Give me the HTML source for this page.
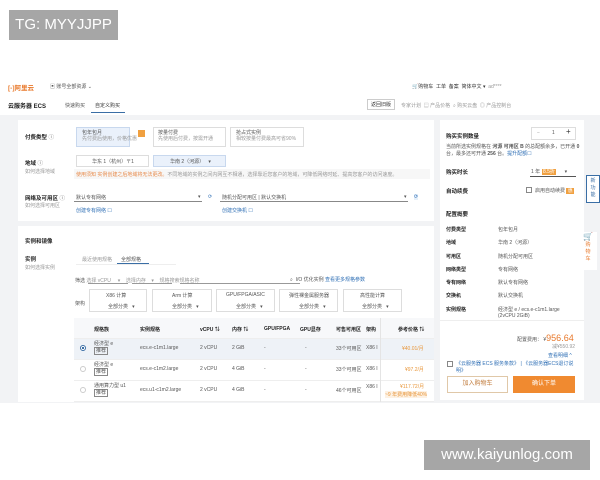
<!DOCTYPE html>
<html><head><meta charset="utf-8"><style>
*{margin:0;padding:0;box-sizing:border-box}
body{width:600px;height:480px;background:#fff;position:relative;overflow:hidden;font-family:"Liberation Sans","Noto Sans CJK SC",sans-serif;color:#333}
.a{position:absolute;white-space:nowrap}
.t{font-size:5px;color:#555}
.b{font-weight:bold;color:#222}
.g{color:#999}
.bl{color:#2f6fb5}
.box{position:absolute;border:1px solid #ddd;background:#fff}
.sel{border-color:#c8d8ee;background:#eaf1fb}
.row{position:absolute;left:74px;width:360px;border-bottom:1px solid #eee;height:21px}
</style></head><body>
<div class="a" style="left:9px;top:10px;width:109px;height:30px;background:#a6a6a6;color:#fff;font-size:15px;line-height:30px;text-align:center">TG: MYYJJPP</div>
<div class="a" style="left:424px;top:440px;width:166px;height:30px;background:#a6a6a6;color:#fff;font-size:15px;line-height:30px;text-align:center">www.kaiyunlog.com</div>

<!-- header -->
<div class="a" style="left:8px;top:82px;font-size:6.5px;color:#e8782a;font-weight:bold">[-]阿里云</div>
<div class="a t" style="left:50px;top:83px">▣ 账号全部资源 ⌄</div>
<div class="a t" style="left:412px;top:83px;color:#333">🛒购物车 &nbsp;工单 &nbsp;备案 &nbsp;简体中文 ▾ &nbsp;<span class="g">ad****</span></div>
<div class="a b" style="left:8px;top:101px;font-size:6px">云服务器 ECS</div>
<div class="a t" style="left:65px;top:102px">快速购买</div>
<div class="a t" style="left:95px;top:102px;color:#333">自定义购买</div>
<div class="a" style="left:91px;top:112px;width:34px;height:1px;background:#3a6ea5"></div>
<div class="a t" style="left:367px;top:99px;border:1px solid #ccc;padding:1px 3px;color:#333">返回旧版</div>
<div class="a t g" style="left:401px;top:102px">专家计划 &nbsp;▤ 产品价格 &nbsp;⌕ 购买云盘 &nbsp;◎ 产品控制台</div>

<!-- gray bg -->
<div class="a" style="left:0;top:115px;width:600px;height:288px;background:#f2f3f5"></div>

<!-- card1 -->
<div class="a" style="left:18px;top:120px;width:416px;height:101px;background:#fff"></div>
<div class="a t b" style="left:25px;top:133px;font-size:5.5px">付费类型 <span class="g">ⓘ</span></div>
<div class="box sel" style="left:76px;top:127px;width:54px;height:20px;background:#eaf1fb"></div>
<div class="a" style="left:138px;top:130px;width:7px;height:7px;background:#f0a040"></div>
<div class="a t" style="left:82px;top:130px;line-height:6px">包年包月<br><span class="g">先付费后使用，价格优惠</span></div>
<div class="box" style="left:153px;top:127px;width:73px;height:20px"></div>
<div class="a t" style="left:158px;top:130px;line-height:6px">按量付费<br><span class="g">先使用后付费，按需开通</span></div>
<div class="box" style="left:230px;top:127px;width:74px;height:20px"></div>
<div class="a t" style="left:236px;top:130px;line-height:6px">抢占式实例<br><span class="g">相较按量付费最高可省90%</span></div>

<div class="a t b" style="left:25px;top:159px;font-size:5.5px">地域 <span class="g">ⓘ</span></div>
<div class="a t g" style="left:25px;top:168px">如何选择地域</div>
<div class="box" style="left:76px;top:155px;width:73px;height:12px"></div>
<div class="a t" style="left:92px;top:158px">华东 1（杭州）〒1</div>
<div class="box sel" style="left:153px;top:155px;width:73px;height:12px"></div>
<div class="a t" style="left:170px;top:158px">华南 2（河源） &nbsp;&nbsp;▾</div>
<div class="a" style="left:74px;top:169px;width:356px;height:10px;background:#f7f7f7"></div>
<div class="a t" style="left:76px;top:171px;color:#e88a4a">使用须知 实例创建之后地域将无法更改。<span class="g">不同地域的实例之间内网互不相通，选择靠近您客户的地域，可降低网络时延、提高您客户的访问速度。</span></div>

<div class="a t b" style="left:25px;top:194px;font-size:5.5px">网络及可用区 <span class="g">ⓘ</span></div>
<div class="a t g" style="left:25px;top:202px">如何选择可用区</div>
<div class="a t" style="left:76px;top:194px">默认专有网络</div>
<div class="a" style="left:74px;top:201px;width:128px;height:1px;background:#888"></div>
<div class="a t" style="left:198px;top:194px">▾</div>
<div class="a t bl" style="left:208px;top:194px">⟳</div>
<div class="a t" style="left:222px;top:194px">随机分配可用区 | 默认交换机</div>
<div class="a" style="left:220px;top:201px;width:188px;height:1px;background:#888"></div>
<div class="a t" style="left:404px;top:194px">▾</div>
<div class="a t bl" style="left:414px;top:194px;background:#e6f0fa">⟳</div>
<div class="a t bl" style="left:76px;top:207px">创建专有网络 ☐</div>
<div class="a t bl" style="left:222px;top:207px">创建交换机 ☐</div>

<!-- card2 -->
<div class="a" style="left:18px;top:226px;width:416px;height:176px;background:#fff"></div>
<div class="a t b" style="left:25px;top:237px;font-size:5.5px">实例和镜像</div>
<div class="a t b" style="left:25px;top:255px;font-size:5.5px">实例</div>
<div class="a t g" style="left:25px;top:264px">如何选择实例</div>
<div class="a t g" style="left:82px;top:256px">最近使用规格</div>
<div class="a t" style="left:121px;top:256px">全部规格</div>
<div class="a" style="left:117px;top:263px;width:32px;height:1px;background:#3a6ea5"></div>
<div class="a" style="left:76px;top:264px;width:100px;height:1px;background:#eee"></div>

<div class="a t" style="left:75px;top:277px">筛选 <span class="g">选择 vCPU &nbsp;&nbsp;&nbsp;&nbsp;▾ &nbsp;&nbsp;&nbsp;选择内存 &nbsp;&nbsp;&nbsp;▾ &nbsp;&nbsp;&nbsp;规格搜索规格名称</span></div>
<div class="a" style="left:88px;top:283px;width:40px;height:1px;background:#999"></div>
<div class="a" style="left:132px;top:283px;width:40px;height:1px;background:#999"></div>
<div class="a" style="left:180px;top:283px;width:120px;height:1px;background:#999"></div>
<div class="a t" style="left:290px;top:276px">⌕ &nbsp;I/O 优化实例 <span class="bl">查看更多规格参数</span></div>

<div class="a t" style="left:75px;top:300px">架构</div>
<div class="box" style="left:89px;top:289px;width:58px;height:23px"></div>
<div class="box" style="left:152px;top:289px;width:60px;height:23px"></div>
<div class="box" style="left:216px;top:289px;width:59px;height:23px"></div>
<div class="box" style="left:279px;top:289px;width:59px;height:23px"></div>
<div class="box" style="left:343px;top:289px;width:59px;height:23px"></div>
<div class="a t" style="left:106px;top:292px">X86 计算</div>
<div class="a t" style="left:172px;top:292px">Arm 计算</div>
<div class="a t" style="left:226px;top:292px">GPU/FPGA/ASIC</div>
<div class="a t" style="left:289px;top:292px">弹性裸金属服务器</div>
<div class="a t" style="left:360px;top:292px">高性能计算</div>
<div class="a t" style="left:108px;top:303px">全部分类 &nbsp;&nbsp;▾</div>
<div class="a t" style="left:172px;top:303px">全部分类 &nbsp;&nbsp;▾</div>
<div class="a t" style="left:236px;top:303px">全部分类 &nbsp;&nbsp;▾</div>
<div class="a t" style="left:299px;top:303px">全部分类 &nbsp;&nbsp;▾</div>
<div class="a t" style="left:362px;top:303px">全部分类 &nbsp;&nbsp;▾</div>

<div class="row" style="top:318px;background:#f7f8fa"></div>
<div class="row" style="top:339px;background:#eef2f7"></div>
<div class="row" style="top:360px"></div>
<div class="row" style="top:381px;height:21px"></div>
<div class="a" style="left:380px;top:318px;width:1px;height:84px;background:#e4e4e4"></div>
<div class="a t b" style="left:94px;top:326px">规格族</div>
<div class="a t b" style="left:140px;top:326px">实例规格</div>
<div class="a t b" style="left:200px;top:326px">vCPU ⇅</div>
<div class="a t b" style="left:232px;top:326px">内存 ⇅</div>
<div class="a t b" style="left:264px;top:326px">GPU/FPGA</div>
<div class="a t b" style="left:300px;top:326px">GPU显存</div>
<div class="a t b" style="left:336px;top:326px">可售可用区</div>
<div class="a t b" style="left:366px;top:326px">架构</div>
<div class="a t b" style="left:398px;top:326px">参考价格 ⇅</div>

<div class="a" style="left:80px;top:345px;width:6px;height:6px;border-radius:50%;border:1px solid #3a6ea5;background:radial-gradient(#3a6ea5 40%,#fff 45%)"></div>
<div class="a" style="left:80px;top:366px;width:6px;height:6px;border-radius:50%;border:1px solid #ccc"></div>
<div class="a" style="left:80px;top:387px;width:6px;height:6px;border-radius:50%;border:1px solid #ccc"></div>

<div class="a t" style="left:94px;top:341px;line-height:7px">经济型 e<br><span style="border:1px solid #888;padding:0 1px">推荐</span></div>
<div class="a t" style="left:94px;top:362px;line-height:7px">经济型 e<br><span style="border:1px solid #888;padding:0 1px">推荐</span></div>
<div class="a t" style="left:94px;top:383px;line-height:7px">通用算力型 u1<br><span style="border:1px solid #888;padding:0 1px">推荐</span></div>
<div class="a t" style="left:140px;top:345px">ecs.e-c1m1.large</div>
<div class="a t" style="left:140px;top:366px">ecs.e-c1m2.large</div>
<div class="a t" style="left:140px;top:387px">ecs.u1-c1m2.large</div>
<div class="a t" style="left:200px;top:345px">2 vCPU</div><div class="a t" style="left:232px;top:345px">2 GiB</div>
<div class="a t" style="left:200px;top:366px">2 vCPU</div><div class="a t" style="left:232px;top:366px">4 GiB</div>
<div class="a t" style="left:200px;top:387px">2 vCPU</div><div class="a t" style="left:232px;top:387px">4 GiB</div>
<div class="a t" style="left:264px;top:345px">-</div><div class="a t" style="left:305px;top:345px">-</div>
<div class="a t" style="left:264px;top:366px">-</div><div class="a t" style="left:305px;top:366px">-</div>
<div class="a t" style="left:264px;top:387px">-</div><div class="a t" style="left:305px;top:387px">-</div>
<div class="a t" style="left:336px;top:345px">33个可用区</div><div class="a t" style="left:366px;top:345px">X86 I</div>
<div class="a t" style="left:336px;top:366px">33个可用区</div><div class="a t" style="left:366px;top:366px">X86 I</div>
<div class="a t" style="left:336px;top:387px">46个可用区</div><div class="a t" style="left:366px;top:384px">X86 I</div>
<div class="a t" style="left:402px;top:345px;color:#e8963a">¥40.01/月</div>
<div class="a t" style="left:405px;top:366px;color:#e8963a">¥97.2/月</div>
<div class="a t" style="left:400px;top:383px;color:#e8963a">¥117.72/月</div>
<div class="a t" style="left:385px;top:391px;color:#e8963a;background:#fdf1e3">~9 年费用降低40%</div>

<!-- right panel -->
<div class="a" style="left:440px;top:120px;width:144px;height:280px;background:#fff"></div>
<div class="a t b" style="left:446px;top:132px;font-size:5.5px">购买实例数量</div>
<div class="box" style="left:531px;top:127px;width:45px;height:13px"></div>
<div class="a t g" style="left:537px;top:130px">−</div><div class="a t" style="left:552px;top:130px">1</div><div class="a" style="left:566px;top:127px;font-size:8px">+</div>
<div class="a t" style="left:446px;top:144px;line-height:7px">当前所选实例规格在 <b>河源 可用区 B</b> 的总配额余多，已开通 <b>0</b><br>台，最多还可开通 <b>256</b> 台。<span class="bl">提升配额☐</span></div>
<div class="a t b" style="left:446px;top:168px;font-size:5.5px">购买时长</div>
<div class="a t" style="left:531px;top:168px">1 年 <span style="background:#f0a040;color:#fff">&nbsp;8.5折&nbsp;</span> &nbsp;&nbsp;&nbsp;&nbsp;&nbsp;▾</div>
<div class="a" style="left:530px;top:176px;width:46px;height:1px;background:#555"></div>
<div class="a t b" style="left:446px;top:187px;font-size:5.5px">自动续费</div>
<div class="a" style="left:526px;top:187px;width:6px;height:6px;border:1px solid #888"></div>
<div class="a t" style="left:535px;top:187px">启用自动续费 <span style="background:#f0a040;color:#fff">&nbsp;惠&nbsp;</span></div>
<div class="a t b" style="left:446px;top:210px;font-size:5.5px">配置概要</div>
<div class="a t b" style="left:446px;top:224px;line-height:13.3px">付费类型<br>地域<br>可用区<br>网络类型<br>专有网络<br>交换机<br>实例规格</div>
<div class="a t" style="left:498px;top:224px;line-height:13.3px">包年包月<br>华南 2（河源）<br>随机分配可用区<br>专有网络<br>默认专有网络<br>默认交换机<br>经济型 e / ecs.e-c1m1.large</div>
<div class="a t" style="left:498px;top:313px">(2vCPU 2GiB)</div>
<div class="a" style="left:440px;top:320px;width:144px;height:1px;background:#eee"></div>
<div class="a t" style="left:517px;top:333px">配置费用： ¥<span style="font-size:9px;color:#e8782a">956.64</span></div>
<div class="a t g" style="left:552px;top:343px">减¥550.92</div>
<div class="a t bl" style="left:548px;top:352px">查看明细 ^</div>
<div class="a" style="left:447px;top:361px;width:6px;height:6px;border:1px solid #888"></div>
<div class="a t bl" style="left:456px;top:361px;line-height:7px">《云服务器 ECS 服务条款》 | 《云服务器ECS退订说<br>明》</div>
<div class="a t" style="left:447px;top:376px;width:61px;height:17px;border:1px solid #e0c8a8;text-align:center;line-height:15px;color:#c07a3a;font-size:6px">加入购物车</div>
<div class="a t" style="left:513px;top:376px;width:62px;height:17px;background:#f08a30;text-align:center;line-height:17px;color:#fff;font-size:6px">确认下单</div>
<div class="a" style="left:586px;top:175px;width:14px;height:28px;border:1px solid #3a6ea5;background:#fff;font-size:5px;color:#3a6ea5;line-height:7px;text-align:center;padding-top:2px">新<br>功<br>能</div>
<div class="a" style="left:579px;top:232px;width:18px;height:38px;background:#fff;font-size:5px;color:#e8782a;line-height:7px;text-align:center;padding-top:1px"><span style="font-size:8px">🛒</span><br>购<br>物<br>车</div>
</body></html>
